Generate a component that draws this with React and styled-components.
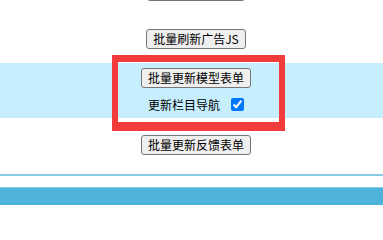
import React from "react";
import styled, { createGlobalStyle } from "styled-components";

const Global = createGlobalStyle`
  html, body { margin: 0; padding: 0; background: #ffffff; overflow: hidden; }
  body { font-family: "Noto Sans CJK SC", "Noto Sans", sans-serif; }
`;

const Page = styled.div`
  position: relative;
  width: 383px;
  height: 205px;
  overflow: hidden;
  display: flex;
  flex-direction: column;
`;

const Row = styled.div`
  display: flex;
  flex-direction: column;
  align-items: center;
  gap: 8px;
  padding-left: 9px;
  margin-top: ${(p) => p.$top}px;
  padding-top: ${(p) => p.$padTop || 0}px;
  padding-bottom: ${(p) => p.$padBottom || 0}px;
  background: ${(p) => (p.$highlight ? "#c6eefd" : "transparent")};
`;

const Button = styled.button`
  height: 20px;
  box-sizing: border-box;
  padding: 0 6px;
  font-family: "Noto Sans CJK SC", "Noto Sans", sans-serif;
  font-size: 12px;
  line-height: 18px;
  color: #000;
  background: #efefef;
  border: 1px solid #767676;
  border-radius: 3px;
  cursor: pointer;
`;

const CheckLine = styled.label`
  display: flex;
  align-items: center;
  gap: 11px;
  height: 16px;
  font-size: 12px;
  color: #000;
`;

const Check = styled.input`
  margin: 0;
  width: 13px;
  height: 13px;
`;

const Rule = styled.div`
  height: ${(p) => p.$h}px;
  margin-top: ${(p) => p.$top}px;
  background: ${(p) => p.$color};
`;

const Footer = styled.div`
  flex: 1;
  background: #4eb3db;
`;

const Annotation = styled.div`
  position: absolute;
  left: 112px;
  top: 55px;
  width: 173px;
  height: 76px;
  box-sizing: border-box;
  border-style: solid;
  border-color: #f23b3b;
  border-width: 7px 6px 9px 6px;
  pointer-events: none;
`;

export default function App() {
  return (
    <Page>
      <Global />
      <Row $top={-19}>
        <Button>批量更新内容页</Button>
      </Row>
      <Row $top={28}>
        <Button>批量刷新广告JS</Button>
      </Row>
      <Row $top={14} $padTop={5} $padBottom={6} $highlight>
        <Button>批量更新模型表单</Button>
        <CheckLine>
          更新栏目导航
          <Check type="checkbox" defaultChecked />
        </CheckLine>
      </Row>
      <Row $top={17}>
        <Button>批量更新反馈表单</Button>
      </Row>
      <Rule $top={19} $h={2} $color="#8ccbe3" />
      <Rule $top={11} $h={1} $color="#8ccbe3" />
      <Footer />
      <Annotation />
    </Page>
  );
}
